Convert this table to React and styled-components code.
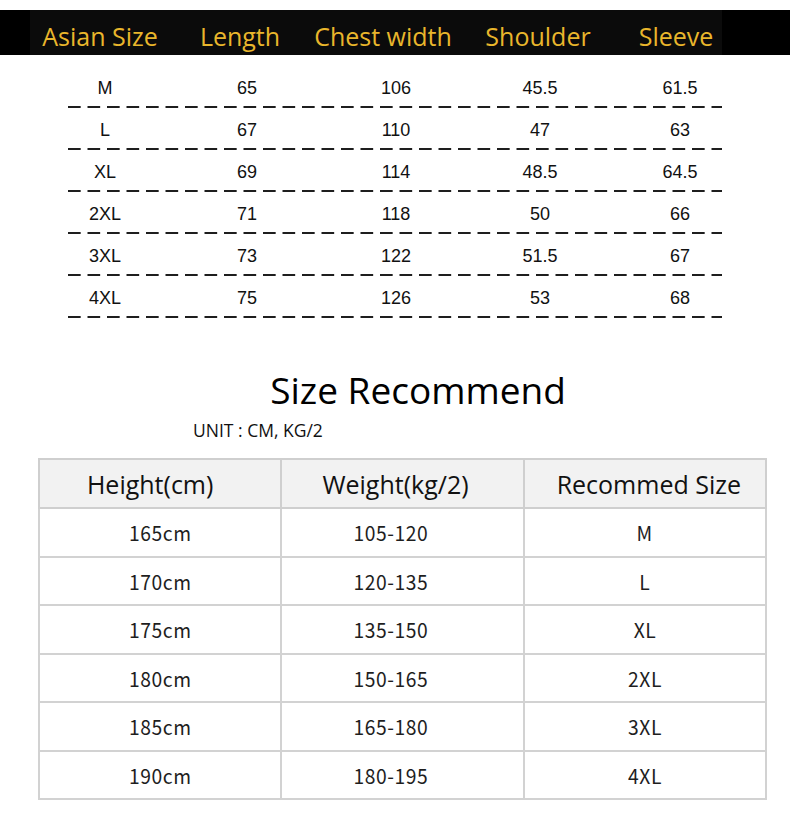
import React from "react";
import styled, { createGlobalStyle } from "styled-components";

const GlobalStyle = createGlobalStyle`
  body {
    margin: 0;
    background: #ffffff;
    font-family: "Liberation Sans", Arial, sans-serif;
  }
`;

// shift = horizontal nudge of the label inside its column (px, + moves right)
const headers = [
  { label: "Asian Size", shift: 0 },
  { label: "Length", shift: 0 },
  { label: "Chest width", shift: 0 },
  { label: "Shoulder", shift: 0 },
  { label: "Sleeve", shift: 5 },
];

const sizes = [
  ["M", "65", "106", "45.5", "61.5"],
  ["L", "67", "110", "47", "63"],
  ["XL", "69", "114", "48.5", "64.5"],
  ["2XL", "71", "118", "50", "66"],
  ["3XL", "73", "122", "51.5", "67"],
  ["4XL", "75", "126", "53", "68"],
];

const recHeaders = [
  { label: "Height(cm)", shift: -20 },
  { label: "Weight(kg/2)", shift: -14 },
  { label: "Recommed Size", shift: 8 },
];

const recShift = [0, -24, 0];

const recommend = [
  ["165cm", "105-120", "M"],
  ["170cm", "120-135", "L"],
  ["175cm", "135-150", "XL"],
  ["180cm", "150-165", "2XL"],
  ["185cm", "165-180", "3XL"],
  ["190cm", "180-195", "4XL"],
];

export default function App() {
  return (
    <Page>
      <GlobalStyle />
      <HeaderBar>
        <HeaderInner>
          {headers.map((h) => (
            <HeaderCell key={h.label} $shift={h.shift}>
              {h.label}
            </HeaderCell>
          ))}
        </HeaderInner>
      </HeaderBar>

      <SizeRows>
        {sizes.map((row) => (
          <SizeRow key={row[0]}>
            {row.map((v, i) => (
              <SizeCell key={i}>{v}</SizeCell>
            ))}
          </SizeRow>
        ))}
      </SizeRows>

      <Title>Size Recommend</Title>
      <Unit>UNIT : CM, KG/2</Unit>

      <Table>
        <thead>
          <tr>
            {recHeaders.map((h) => (
              <Th key={h.label} $shift={h.shift}>
                {h.label}
              </Th>
            ))}
          </tr>
        </thead>
        <tbody>
          {recommend.map((row) => (
            <tr key={row[0]}>
              {row.map((v, i) => (
                <Td key={i} $shift={recShift[i]}>
                  <Narrow>{v}</Narrow>
                </Td>
              ))}
            </tr>
          ))}
        </tbody>
      </Table>
    </Page>
  );
}

const Page = styled.div`
  width: 790px;
  padding-top: 10px;
  padding-bottom: 16px;
`;

const HeaderBar = styled.div`
  background: #000000;
  height: 45px;
`;

const HeaderInner = styled.div`
  margin-left: 30px;
  width: 692px;
  height: 45px;
  background: #0b0b0b;
  display: grid;
  grid-template-columns: 140px 140px 146px 164px 102px;
  align-items: center;
`;

const HeaderCell = styled.div`
  text-align: center;
  font-family: "Open Sans", "Noto Sans", sans-serif;
  font-size: 25px;
  color: #e9b62c;
  padding-top: 6px;
  transform: translateX(${(p) => p.$shift}px);
`;

const SizeRows = styled.div`
  margin-top: 11px;
  margin-left: 68px;
  width: 654px;
`;

const SizeRow = styled.div`
  height: 42px;
  display: grid;
  grid-template-columns: 74px 210px 88px 200px 80px;
  align-items: center;
  box-sizing: border-box;
  padding-top: 3px;
  padding-bottom: 1px;
  background-image: linear-gradient(to right, #1e1e1e 13px, transparent 13px);
  background-size: 19.5px 2px;
  background-repeat: repeat-x;
  background-position: left bottom;
`;

const SizeCell = styled.div`
  text-align: center;
  font-size: 18px;
  color: #111111;
`;

const Title = styled.div`
  margin-top: 50px;
  text-align: center;
  padding-left: 46px;
  font-family: "Open Sans", "Noto Sans", sans-serif;
  font-size: 37px;
  color: #000000;
  line-height: 44px;
`;

const Unit = styled.div`
  margin-top: 7px;
  margin-left: 193px;
  font-family: "Open Sans", "Noto Sans", sans-serif;
  font-size: 17.5px;
  color: #111111;
  line-height: 23px;
`;

const Table = styled.table`
  margin-top: 16px;
  margin-left: 38px;
  width: 729px;
  border-collapse: collapse;
  table-layout: fixed;
  border: 2px solid #cfcfcf;
`;

const Th = styled.th`
  height: 47px;
  padding: 0;
  padding-left: ${(p) => (p.$shift > 0 ? p.$shift : 0)}px;
  padding-right: ${(p) => (p.$shift < 0 ? -p.$shift : 0)}px;
  background: #f2f2f2;
  border: 2px solid #cfcfcf;
  font-family: "Open Sans", "Noto Sans", sans-serif;
  font-weight: 400;
  font-size: 25px;
  color: #111111;
`;

const Td = styled.td`
  height: 46.5px;
  padding: 0;
  padding-left: ${(p) => (p.$shift > 0 ? p.$shift : 0)}px;
  padding-right: ${(p) => (p.$shift < 0 ? -p.$shift : 0)}px;
  text-align: center;
  border: 2px solid #d2d2d2;
`;

const Narrow = styled.span`
  display: inline-block;
  font-family: "Noto Sans CJK SC", "Liberation Sans", sans-serif;
  font-size: 20.5px;
  letter-spacing: 0.6px;
  color: #1e1e1e;
  transform: scaleX(0.94);
`;
